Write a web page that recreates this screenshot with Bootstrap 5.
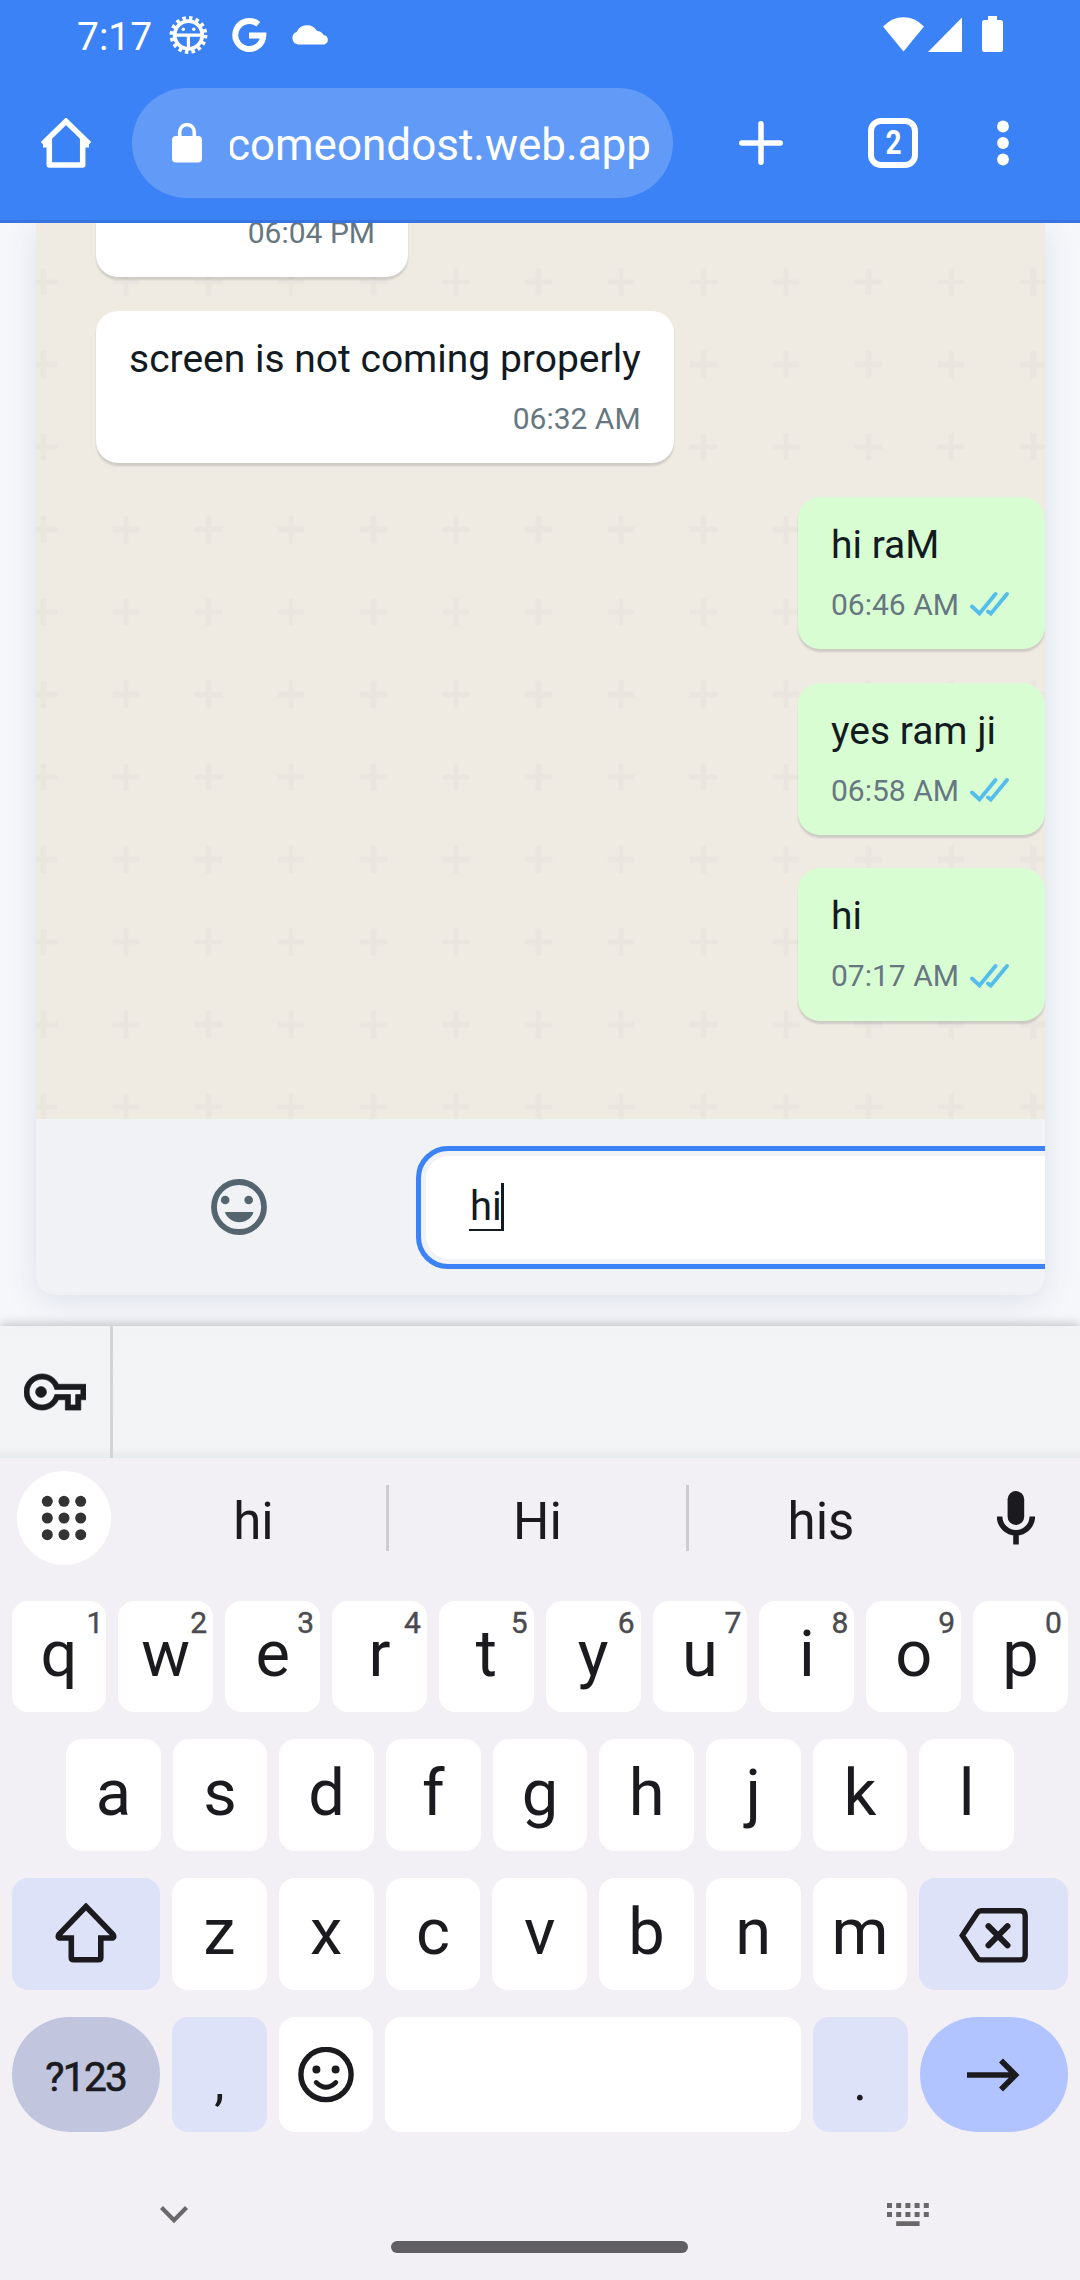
<!DOCTYPE html>
<html lang="en">
<head>
<meta charset="utf-8">
<meta name="viewport" content="width=device-width, initial-scale=1">
<title>comeondost</title>
<link href="https://cdn.jsdelivr.net/npm/bootstrap@5.3.0/dist/css/bootstrap.min.css" rel="stylesheet">
<style>
body{font-family:Roboto,"Liberation Sans",sans-serif;width:1080px;height:2280px;overflow:hidden;background:#f5f7fb;color:#111b21}
svg{display:block;flex:none}
.topbar{height:223px;background:#3b82f6;border-bottom:3px solid #3874e0;color:#fff;flex:none;z-index:3}
.status{height:66px;padding-left:77px}
.clock{font-size:39px;line-height:66px;padding-top:4px;width:84px}
.tools{height:154px;padding-left:41px}
.urlpill{height:110px;width:541px;margin-left:41px;border-radius:55px;background:rgba(255,255,255,.2);padding-left:40px}
.urltext{width:421px;margin-left:28px;font-size:44px;line-height:60px;overflow:hidden;padding-top:3px}
.plusicon{margin-left:66px}
.tabs{width:50px;height:50px;border:6px solid #fff;border-radius:13px;margin-left:85px}
.tabs span{font-weight:700;font-size:33px;line-height:38px;transform:scaleX(.85)}
.dotsicon{margin-left:79px}
.stage{height:1103px;padding-left:36px;flex:none}
.chatcard{width:1009px;height:1072px;border-radius:0 0 20px 20px;box-shadow:0 6px 32px rgba(60,80,110,.13);background:#f0f2f6}
.thread{height:896px;padding:0 0 98px 60px;gap:33.3px;background-color:#efeae2;background-position:-33.75px 17.75px;background-size:82.5px 82.5px;
background-image:url("data:image/svg+xml,%3Csvg xmlns='http://www.w3.org/2000/svg' width='82.5' height='82.5' viewBox='0 0 30 30'%3E%3Cpath d='M14 10h2v4h4v2h-4v4h-2v-4h-4v-2h4z' fill='%23000' fill-opacity='.02'/%3E%3C/svg%3E")}
.bubble{flex:none;height:152.600px;border-radius:22px;background:#fff;padding:19px 33px 0;box-shadow:0 3px 2px rgba(11,20,26,.14)}
.bubble.cut{width:312px}
.bubble.mine{background:#d9fdd3;width:247px}
.msg{font-size:39px;line-height:58px;white-space:nowrap;height:67px}
.when{font-size:30px;line-height:44px;color:#667781;white-space:nowrap}
.when svg{margin:0 2px 0 11px}
.composer{height:176px;padding-left:175px}
.entry{width:760px;height:123px;border:5px solid #3b82f6;border-radius:32px;margin-left:149px;padding:5px 0 5px 5px}
.entry>div{border-radius:23px;background:#fff;padding-left:43px}
.typed{font-size:40px;line-height:48px;height:48px;border-bottom:2px solid #111b21;border-right:3px solid #111b21;padding-left:1px;width:35px}
.autofill{height:132px;background:linear-gradient(#f1f3f5 0,#f2f4f6 120px,#e8ebec 132px);box-shadow:0 -2px 10px rgba(0,0,0,.22);flex:none;z-index:2}
.keybox{width:113px;border-right:3px solid #d3d4d6;padding-left:24px}
.kb{background:#f2f0f5;color:#1b1b1f;z-index:3}
.sugg{height:143px;padding:13px 0 0 17px}
.gridbtn{width:94px;height:94px;border-radius:50%;background:#fff}
.words{height:94px;width:969px}
.word{font-size:51px;line-height:60px;text-align:center;padding-top:8px;width:297px}
.word.one{width:275px;padding-left:10px}
.word.three{width:264px}
.micicon{margin-left:44px}
.rule{width:3px;height:66px;background:#cdccd1}
.keys{gap:27px}
.krow{gap:12px;padding:0 12px 0 11.500px;height:112px}
.krow.first{height:111px}
.krow.mid{padding:0 66px}
.krow.last{height:115px}
.keycap{flex:1 1 0;background:#fff;border-radius:16px;font-size:65px;line-height:1;padding-bottom:4px;position:relative}
.krow.last .keycap,.keycap.side{padding-bottom:0}
.keycap.side{flex:0 0 148.500px}
.keycap.tint{background:#dee2f8}
.keycap.num{background:#c1c6de;border-radius:57.500px;font-size:40.500px;letter-spacing:-1.600px;-webkit-text-stroke:.7px #1b1b1f}
.krow.last .num{padding-top:5px}
.keycap.go{background:#b2c4ff;border-radius:57.500px}
.keycap.space{flex:0 0 416px}
.keycap.punct{flex:0 0 94.600px;font-size:52px}
.punct span{padding-top:17px}
.keycap i{position:absolute;right:6px;top:7px;font:400 30px/30px Roboto,sans-serif;color:#4b4b4f;-webkit-text-stroke:.4px #4b4b4f}
.keycap i.slim{right:3px}
.navrow{height:148px}
.homebar{width:297px;height:12px;border-radius:6px;background:#606062;margin-top:109px}
.chev{margin:74px 203px 0 160px}
.kbicon{margin:71px 0 0 199px}
</style>
<script src="https://cdn.jsdelivr.net/npm/bootstrap@5.3.0/dist/js/bootstrap.bundle.min.js"></script>
</head>
<body class="d-flex flex-column">

<header class="topbar position-relative">
  <div class="status d-flex">
    <div class="clock">7:17</div>
    <svg width="170" height="66" viewBox="161 0 170 66" fill="#fff">
      <circle cx="188.5" cy="35" r="13.8" fill="none" stroke="#fff" stroke-width="3.8"/>
      <circle cx="188.5" cy="35" r="16.600" fill="none" stroke="#fff" stroke-width="4.600" stroke-dasharray="3.400 3.119"/>
      <path d="M175 33.400h27v3.400h-12v13h-3.200v-13H175z"/>
      <circle cx="183.300" cy="29.300" r="1.700"/><circle cx="193.800" cy="29.300" r="1.700"/>
      <path d="M258.300 24.300A14 14 0 1 0 263.300 35.400H249" fill="none" stroke="#fff" stroke-width="6"/>
      <path d="M298 44.500a6.500 6.500 0 0 1-1.400-12.500A11.500 11.500 0 0 1 317 31a8 8 0 0 1 6.500 4A4.900 4.900 0 0 1 324.500 44.500z"/>
    </svg>
    <svg class="ms-auto" width="197" height="66" viewBox="883 0 197 66" fill="#fff">
      <path d="M903.500 51.500 883 26.500Q892 17.200 903.500 17.200T924 26.500z"/>
      <path d="M928 52 962 17.500V52z"/>
      <path d="M988 16h9v4h3.500q2.500 0 2.500 2.500v27q0 2.500-2.500 2.500h-16q-2.500 0-2.500-2.500v-27q0-2.500 2.500-2.500h3.500z"/>
    </svg>
  </div>
  <div class="tools d-flex align-items-center">
    <svg width="50" height="50" viewBox="41 118 50 50" fill="none" stroke="#fff" stroke-width="5.500" stroke-linejoin="round">
      <path d="M49.300 138V165H82.700V138" /><path d="M43 145.500h5L49 140M89 145.500h-5L83 140" stroke-width="4" stroke-linejoin="miter"/><path d="M42.700 144 66 121.300 89.300 144" stroke-linejoin="miter"/>
    </svg>
    <div class="urlpill d-flex align-items-center">
      <svg width="30" height="40" viewBox="172 122.500 30 40"><rect x="172" y="135.500" width="30" height="26.500" rx="4" fill="#fff"/><path d="M179.700 137v-5.500a7.300 7.300 0 0 1 14.600 0v5.500" fill="none" stroke="#fff" stroke-width="3.600"/></svg>
      <div class="urltext d-flex justify-content-end">comeondost.web.app</div>
    </div>
    <svg class="plusicon" width="44" height="44" viewBox="0 0 44 44" stroke="#fff" stroke-width="5.500" stroke-linecap="round"><path d="M22 2.800v38.400M2.800 22h38.400"/></svg>
    <div class="tabs d-flex justify-content-center"><span>2</span></div>
    <svg class="dotsicon" width="12" height="46" viewBox="0 0 12 46" fill="#fff"><circle cx="6" cy="6.500" r="5.900"/><circle cx="6" cy="23" r="5.900"/><circle cx="6" cy="39.500" r="5.900"/></svg>
  </div>
</header>

<main class="stage">
  <div class="chatcard overflow-hidden">
    <div class="thread d-flex flex-column justify-content-end align-items-start overflow-hidden">
      <div class="bubble cut"><div class="msg"></div><div class="when text-end">06:04 PM</div></div>
      <div class="bubble"><div class="msg">screen is not coming properly</div><div class="when text-end">06:32 AM</div></div>
      <div class="bubble mine ms-auto"><div class="msg">hi raM</div><div class="when d-flex align-items-center">06:46 AM<svg width="39" height="25" viewBox="0 0 39 25" fill="none" stroke="#53bdeb" stroke-width="3.800" stroke-linecap="round"><path d="M2 14.500 9.500 21.500 25.500 2M18 19.500 20.800 21.700 37 2"/></svg></div></div>
      <div class="bubble mine ms-auto"><div class="msg">yes ram ji</div><div class="when d-flex align-items-center">06:58 AM<svg width="39" height="25" viewBox="0 0 39 25" fill="none" stroke="#53bdeb" stroke-width="3.800" stroke-linecap="round"><path d="M2 14.500 9.500 21.500 25.500 2M18 19.500 20.800 21.700 37 2"/></svg></div></div>
      <div class="bubble mine ms-auto"><div class="msg">hi</div><div class="when d-flex align-items-center">07:17 AM<svg width="39" height="25" viewBox="0 0 39 25" fill="none" stroke="#53bdeb" stroke-width="3.800" stroke-linecap="round"><path d="M2 14.500 9.500 21.500 25.500 2M18 19.500 20.800 21.700 37 2"/></svg></div></div>
    </div>
    <div class="composer d-flex align-items-center">
      <svg width="56" height="56" viewBox="211 1179 56 56" fill="#54656f"><circle cx="239" cy="1207" r="25" fill="none" stroke="#54656f" stroke-width="5.800"/><circle cx="225.200" cy="1200" r="4.300"/><circle cx="248.700" cy="1200" r="4.300"/><path d="M225 1212h28.500c-1.500 6-7.500 10.200-14.200 10.200S226.500 1218 225 1212z"/></svg>
      <div class="entry flex-shrink-0"><div class="h-100 d-flex align-items-center"><div class="typed">hi</div></div></div>
    </div>
  </div>
</main>

<div class="autofill d-flex position-relative">
  <div class="keybox d-flex align-items-center">
    <svg width="62" height="62" viewBox="0 0 24 24" fill="#1b1b1f" stroke="#1b1b1f" stroke-width=".25"><path d="M22 19h-6v-4h-2.680c-1.140 2.420-3.600 4-6.320 4-3.860 0-7-3.140-7-7s3.140-7 7-7c2.720 0 5.170 1.580 6.320 4H24v6h-2v4zm-4-2h2v-4h2v-2H11.940l-.23-.67C11.010 8.340 9.110 7 7 7c-2.760 0-5 2.240-5 5s2.240 5 5 5c2.110 0 4.010-1.340 4.710-3.330l.23-.67H18v4z"/><circle cx="6.600" cy="12" r="2.100"/></svg>
  </div>
</div>

<section class="kb flex-fill position-relative">
  <div class="sugg d-flex align-items-start">
    <div class="gridbtn d-flex align-items-center justify-content-center flex-shrink-0">
      <svg width="46" height="46" viewBox="0 0 46 46" fill="#333"><circle cx="6.300" cy="6.300" r="5.500"/><circle cx="23" cy="6.300" r="5.500"/><circle cx="39.700" cy="6.300" r="5.500"/><circle cx="6.300" cy="23" r="5.500"/><circle cx="23" cy="23" r="5.500"/><circle cx="39.700" cy="23" r="5.500"/><circle cx="6.300" cy="39.700" r="5.500"/><circle cx="23" cy="39.700" r="5.500"/><circle cx="39.700" cy="39.700" r="5.500"/></svg>
    </div>
    <div class="words d-flex align-items-center">
      <div class="word one">hi</div><div class="rule"></div>
      <div class="word">Hi</div><div class="rule"></div>
      <div class="word three">his</div>
      <svg class="micicon" width="38" height="54" viewBox="997 1491 38 54"><rect x="1007.600" y="1491" width="16.600" height="34" rx="8.300" fill="#1b1b1f"/><path d="M999.600 1516.500a16.300 16.300 0 0 0 32.700 0M1016 1533v11.500" fill="none" stroke="#1b1b1f" stroke-width="5.600"/></svg>
    </div>
  </div>
  <div class="keys d-flex flex-column">
    <div class="krow first d-flex">
      <div class="keycap d-flex align-items-center justify-content-center">q<i class="slim">1</i></div>
      <div class="keycap d-flex align-items-center justify-content-center">w<i>2</i></div>
      <div class="keycap d-flex align-items-center justify-content-center">e<i>3</i></div>
      <div class="keycap d-flex align-items-center justify-content-center">r<i>4</i></div>
      <div class="keycap d-flex align-items-center justify-content-center">t<i>5</i></div>
      <div class="keycap d-flex align-items-center justify-content-center">y<i>6</i></div>
      <div class="keycap d-flex align-items-center justify-content-center">u<i>7</i></div>
      <div class="keycap d-flex align-items-center justify-content-center">i<i>8</i></div>
      <div class="keycap d-flex align-items-center justify-content-center">o<i>9</i></div>
      <div class="keycap d-flex align-items-center justify-content-center">p<i>0</i></div>
    </div>
    <div class="krow mid d-flex">
      <div class="keycap d-flex align-items-center justify-content-center">a</div>
      <div class="keycap d-flex align-items-center justify-content-center">s</div>
      <div class="keycap d-flex align-items-center justify-content-center">d</div>
      <div class="keycap d-flex align-items-center justify-content-center">f</div>
      <div class="keycap d-flex align-items-center justify-content-center">g</div>
      <div class="keycap d-flex align-items-center justify-content-center">h</div>
      <div class="keycap d-flex align-items-center justify-content-center">j</div>
      <div class="keycap d-flex align-items-center justify-content-center">k</div>
      <div class="keycap d-flex align-items-center justify-content-center">l</div>
    </div>
    <div class="krow d-flex">
      <div class="keycap side tint d-flex align-items-center justify-content-center">
        <svg width="64" height="62" viewBox="53.500 1903 64 62" fill="none" stroke="#1b1b1f" stroke-width="5.600"><path d="M85.500 1906.500 58.500 1934.500q-2 3.500 1.500 3.500H70.800V1957.500q0 2.300 2.300 2.300H98q2.300 0 2.300-2.300V1938H111q3.500 0 1.500-3.500z" stroke-linejoin="miter"/></svg>
      </div>
      <div class="keycap d-flex align-items-center justify-content-center">z</div>
      <div class="keycap d-flex align-items-center justify-content-center">x</div>
      <div class="keycap d-flex align-items-center justify-content-center">c</div>
      <div class="keycap d-flex align-items-center justify-content-center">v</div>
      <div class="keycap d-flex align-items-center justify-content-center">b</div>
      <div class="keycap d-flex align-items-center justify-content-center">n</div>
      <div class="keycap d-flex align-items-center justify-content-center">m</div>
      <div class="keycap side tint d-flex align-items-center justify-content-center">
        <svg width="70" height="58" viewBox="958 1906 70 58" fill="none" stroke="#1b1b1f" stroke-width="5.400"><path d="M961.300 1936.500 976.500 1913.500q1.300-1.800 3.500-1.800h39.500q4.700 0 4.700 4.700v39.800q0 4.700-4.700 4.700H980q-2.200 0-3.500-1.800z"/><path d="M987.500 1927.200 1006.500 1946.300M1006.500 1927.200 987.500 1946.300" stroke-width="6" stroke-linecap="round"/></svg>
      </div>
    </div>
    <div class="krow last d-flex">
      <div class="keycap side num d-flex align-items-center justify-content-center">?123</div>
      <div class="keycap punct tint d-flex align-items-center justify-content-center"><span>,</span></div>
      <div class="keycap d-flex align-items-center justify-content-center">
        <svg width="56" height="56" viewBox="-28 -27.500 56 56" fill="#1b1b1f"><circle r="25.100" fill="none" stroke="#1b1b1f" stroke-width="5.400"/><circle cx="-9.600" cy="-5" r="4"/><circle cx="9.600" cy="-5" r="4"/><path d="M-9.800 8q9.800 9.400 19.600 0" fill="none" stroke="#1b1b1f" stroke-width="4.800" stroke-linecap="round"/></svg>
      </div>
      <div class="keycap space"></div>
      <div class="keycap punct tint d-flex align-items-center justify-content-center"><span>.</span></div>
      <div class="keycap side go d-flex align-items-center justify-content-center">
        <svg width="54" height="34" viewBox="0 0 54 34" fill="none" stroke="#1b1b1f" stroke-width="5.600"><path d="M0 17H47M34 2.500 48.500 17 34 31.500"/></svg>
      </div>
    </div>
  </div>
  <div class="navrow d-flex">
    <svg class="chev" width="28" height="18" viewBox="0 0 28 18" fill="none" stroke="#686868" stroke-width="4.200"><path d="M1.500 1.500 14 14.200 26.500 1.500"/></svg>
    <div class="homebar"></div>
    <svg class="kbicon" width="42" height="24" viewBox="0 0 42 24" fill="#686868"><path d="M0 0h5v5H0zM9.200 0h5v5h-5zM18.400 0h5v5h-5zM27.600 0h5v5h-5zM36.800 0h5v5h-5zM0 9h5v5H0zM9.200 9h5v5h-5zM18.400 9h5v5h-5zM27.600 9h5v5h-5zM36.800 9h5v5h-5zM9.200 18.300h23.400v4.700H9.200z"/></svg>
  </div>
</section>
</body>
</html>
